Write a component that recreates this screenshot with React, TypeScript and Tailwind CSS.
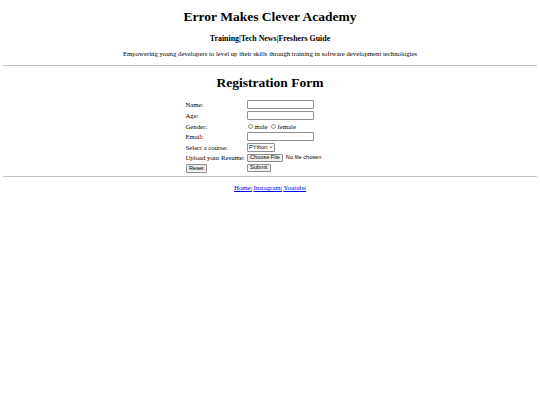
import { useState } from "react";

const serif = "font-['Liberation_Serif','Times_New_Roman',serif]";
const sans = "font-['Liberation_Sans',Arial,sans-serif]";

function Row({ label, children, h }: { label: string; children: React.ReactNode; h: string }) {
  return (
    <div className={`flex items-center ${h}`}>
      <div className="w-[61px] shrink-0">{label}</div>
      <div className="flex items-center">{children}</div>
    </div>
  );
}

export default function App() {
  const [gender, setGender] = useState("");

  const inputCls =
    "w-[67px] h-[9px] border border-[#8f8f8f] rounded-[1px] bg-white px-[1px] text-[5.6px] outline-none";
  const btnCls = `${sans} h-[8.5px] px-[2.5px] border border-[#8f8f8f] rounded-[1px] bg-[#efefef] text-[5.6px] leading-none text-black`;
  const radioCls =
    "appearance-none w-[5.4px] h-[5.4px] rounded-full border border-[#8f8f8f] mx-[1.3px] bg-white checked:bg-[#0075ff]";

  return (
    <div className={`${serif} min-h-[405px] bg-white text-black px-[3.4px] pt-[9px]`}>
      <h1 className="text-center text-[13.5px] leading-[15.5px] font-bold">Error Makes Clever Academy</h1>
      <h3 className="mt-[9px] text-center text-[7.9px] leading-[9px] font-bold">
        Training|Tech News|Freshers Guide
      </h3>
      <p className="mt-[7.9px] text-center text-[6.75px] leading-[7.8px]">
        Empowering young developers to level up their skills through training in software development technologies
      </p>
      <hr className="mt-[6.5px] border-0 border-t border-[#c4c4c4]" />

      <h1 className="mt-[9px] text-center text-[13.5px] leading-[15.5px] font-bold">Registration Form</h1>

      <form className="mt-[9px] flex justify-center text-[6.75px] leading-[7.8px]">
        <div className="w-[171px] pl-[1px] flex flex-col">
          <Row label="Name:" h="h-[11px]">
            <input type="text" className={inputCls} />
          </Row>
          <Row label="Age:" h="h-[11px]">
            <input type="text" className={inputCls} />
          </Row>
          <Row label="Gender:" h="h-[10.5px]">
            <label className="flex items-center mr-[2px]">
              <input
                type="radio"
                name="gender"
                checked={gender === "male"}
                onChange={() => setGender("male")}
                className={radioCls}
              />
              male
            </label>
            <label className="flex items-center">
              <input
                type="radio"
                name="gender"
                checked={gender === "female"}
                onChange={() => setGender("female")}
                className={radioCls}
              />
              female
            </label>
          </Row>
          <Row label="Email:" h="h-[10.5px]">
            <input type="email" className={inputCls} />
          </Row>
          <Row label="Select a course:" h="h-[10.5px]">
            <div
              className={`${sans} flex items-center h-[8.5px] w-[28.5px] border border-[#8f8f8f] rounded-[1px] bg-white pl-[1.5px] text-[5.6px] leading-none`}
            >
              <span>PYthon</span>
              <svg viewBox="0 0 10 10" className="ml-[1.5px] w-[4px] h-[4px]">
                <path d="M2 3.5 L5 6.5 L8 3.5" fill="none" stroke="black" strokeWidth="1.8" />
              </svg>
            </div>
          </Row>
          <Row label="Upload your Resume:" h="h-[10.5px]">
            <div className="flex items-center whitespace-nowrap">
              <button type="button" className={btnCls}>
                Choose File
              </button>
              <span className={`${sans} ml-[2.5px] text-[5.6px]`}>No file chosen</span>
            </div>
          </Row>
          <div className="flex items-center h-[10px]">
            <div className="w-[61px] shrink-0">
              <button type="reset" className={btnCls}>
                Reset
              </button>
            </div>
            <button type="button" className={btnCls}>
              Submit
            </button>
          </div>
        </div>
      </form>

      <hr className="mt-[3px] border-0 border-t border-[#c4c4c4]" />

      <p className="mt-[7px] text-center text-[6.75px] leading-[7.8px]">
        <a href="#" className="text-[#0000ee] underline">Home|</a>{" "}
        <a href="#" className="text-[#0000ee] underline">Instagram|</a>{" "}
        <a href="#" className="text-[#0000ee] underline">Youtube</a>
      </p>
    </div>
  );
}
